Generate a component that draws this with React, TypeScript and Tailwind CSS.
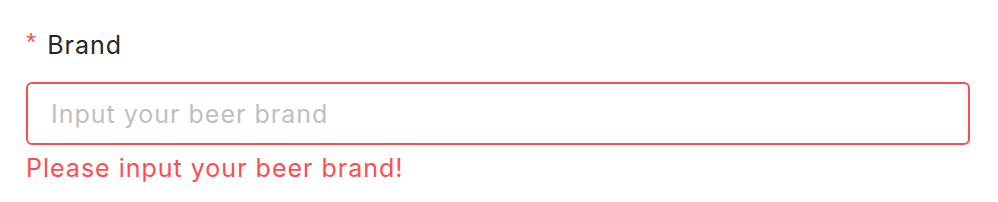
export default function App() {
  return (
    <div className="w-[998px] h-[202px] bg-white px-[26px] pt-[27px] font-['Inter','Liberation_Sans',sans-serif] tracking-[1px]">
      <label htmlFor="brand" className="flex items-start h-[36px] text-[25px] leading-[36px] text-[#262626]">
        <span className="text-[#ff4d4f] font-['Liberation_Sans',sans-serif] text-[26px] leading-[26px] mt-[2px] mr-[10px]">*</span>
        <span>Brand</span>
      </label>
      <input
        id="brand"
        type="text"
        placeholder="Input your beer brand"
        className="mt-[19px] block w-[944px] h-[63px] rounded-[6px] border-2 border-[#ff4d4f] px-[23px] text-[25px] tracking-[1px] text-[#262626] placeholder:text-[#bfbfbf] outline-none"
      />
      <div className="mt-[5px] text-[25px] leading-[36px] text-[#ff4d4f]">Please input your beer brand!</div>
    </div>
  );
}
